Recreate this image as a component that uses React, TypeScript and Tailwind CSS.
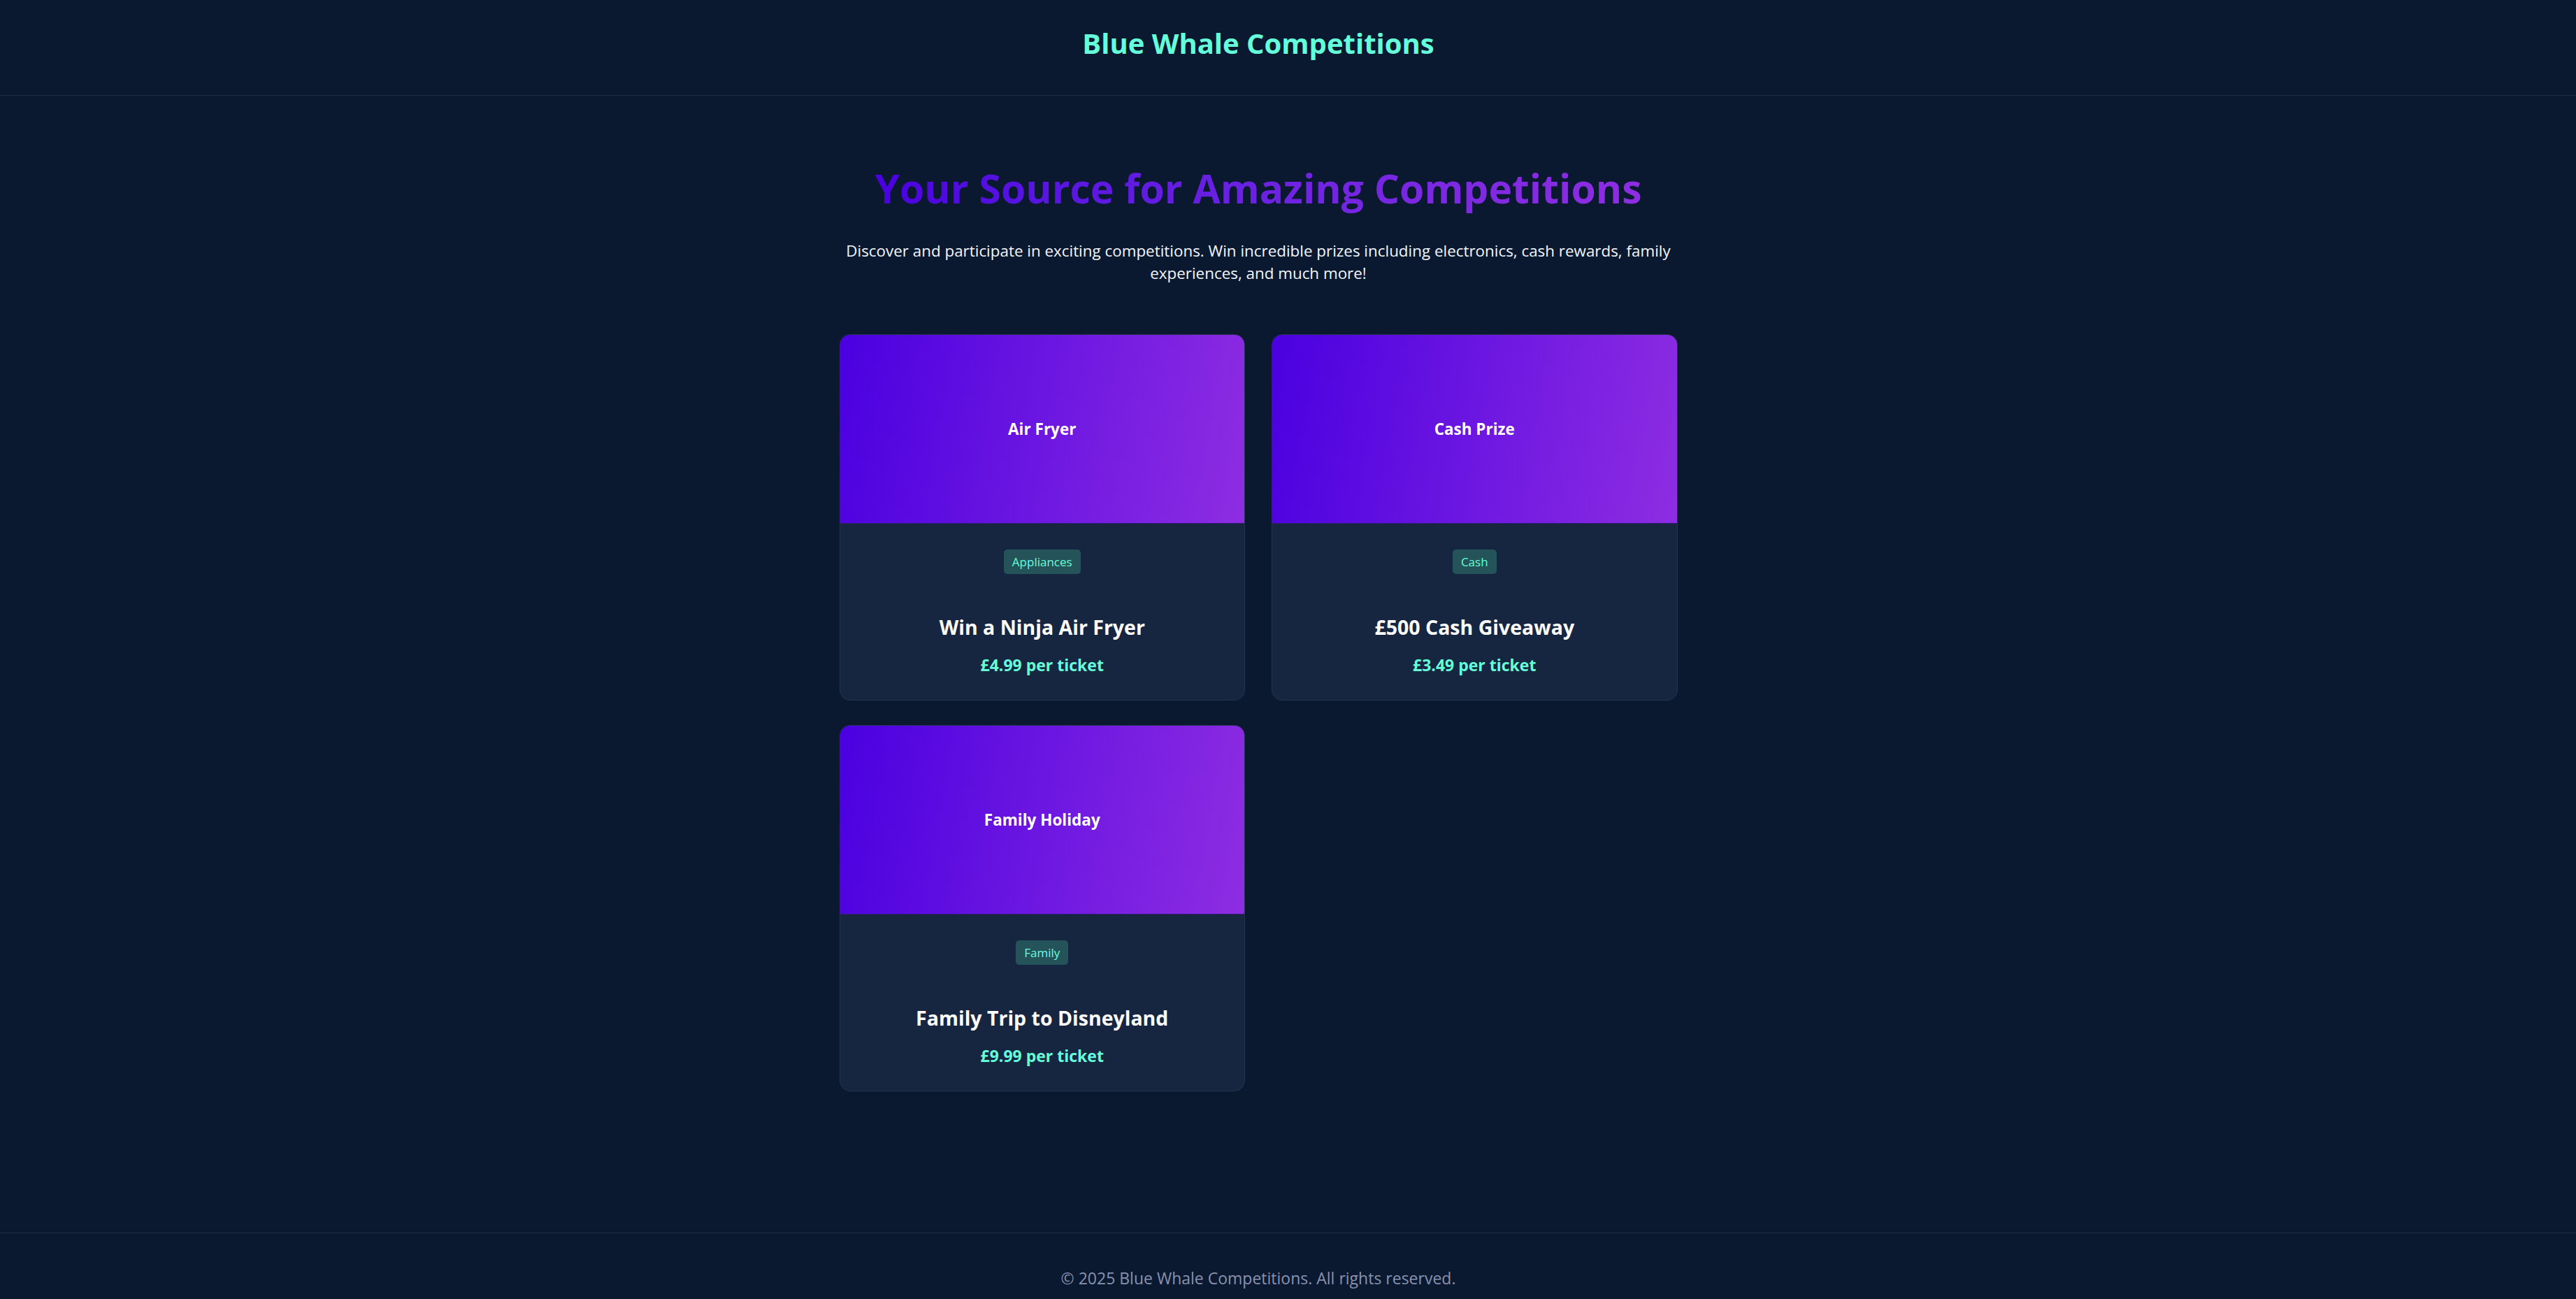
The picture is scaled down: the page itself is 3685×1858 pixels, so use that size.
import React from "react";

type Card = { label: string; tag: string; title: string; price: string };

const cards: Card[] = [
  { label: "Air Fryer", tag: "Appliances", title: "Win a Ninja Air Fryer", price: "£4.99 per ticket" },
  { label: "Cash Prize", tag: "Cash", title: "£500 Cash Giveaway", price: "£3.49 per ticket" },
  { label: "Family Holiday", tag: "Family", title: "Family Trip to Disneyland", price: "£9.99 per ticket" },
];

function CompetitionCard({ c }: { c: Card }) {
  return (
    <div className="rounded-[15px] border border-[#24334d] bg-[#172640] overflow-hidden flex flex-col">
      <div className="h-[270px] flex items-center justify-center bg-[linear-gradient(100deg,#4a00e0,#8e2de2)] border-b border-[#3a1a80]">
        <span className="text-[22.5px] font-bold text-white">{c.label}</span>
      </div>
      <div className="flex flex-col items-center pt-[37px] pb-[34px]">
        <span className="h-[35px] px-[12px] rounded-[5px] bg-[#24545a] text-[#64ffda] text-[17px] leading-[35px]">
          {c.tag}
        </span>
        <h3 className="mt-[56px] text-[28.5px] font-bold leading-[40px] text-white">{c.title}</h3>
        <p className="mt-[18px] text-[23px] font-bold leading-[32px] text-[#64ffda]">{c.price}</p>
      </div>
    </div>
  );
}

export default function App() {
  return (
    <div className="min-h-screen bg-[#0a192f] text-white font-['Open_Sans','Noto_Sans',sans-serif]">
      <header className="h-[137px] border-b border-[#1d2c47] flex items-center justify-center pb-[13px] pr-[85px]">
        <h1 className="text-[40px] font-bold leading-none text-[#64ffda]">Blue Whale Competitions</h1>
      </header>
      <main className="pt-[95px] pb-[202px] pr-[85px] flex flex-col items-center">
        <h2 className="inline-block bg-gradient-to-r from-[#4a00e0] to-[#8e2de2] bg-clip-text text-transparent text-[57px] font-bold leading-[75px]">
          Your Source for Amazing Competitions
        </h2>
        <p className="mt-[36px] w-[1199px] text-center text-[22.4px] leading-[32px] text-[#f2f6ff]">
          Discover and participate in exciting competitions. Win incredible prizes including electronics, cash rewards, family experiences, and much more!
        </p>
        <div className="mt-[71px] w-[1199px] grid grid-cols-2 gap-x-[38px] gap-y-[35px]">
          {cards.map((c) => (
            <CompetitionCard key={c.title} c={c} />
          ))}
        </div>
      </main>
      <footer className="border-t border-[#1d2c47] pt-[48px] pb-[50px] pr-[85px] text-center text-[23px] leading-[33px] text-[#8892b0]">
        © 2025 Blue Whale Competitions. All rights reserved.
      </footer>
    </div>
  );
}
